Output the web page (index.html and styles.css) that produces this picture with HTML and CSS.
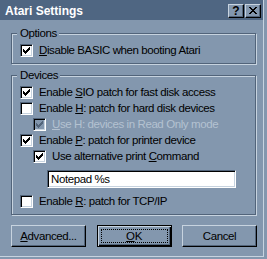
FILE: index.html
```html
<!DOCTYPE html>
<html>
<head>
<meta charset="utf-8">
<title>Atari Settings</title>
<link rel="stylesheet" href="styles.css">
</head>
<body>
<div class="window">
  <div class="titlebar">
    <span class="title">Atari Settings</span>
    <div class="caption-btns">
      <span class="cap cap-help">?</span>
      <span class="cap cap-close"><svg width="8" height="7" viewBox="0 0 8 7" shape-rendering="crispEdges"><path d="M0 0h2v1H0zM6 0h2v1H6zM1 1h2v1H1zM5 1h2v1H5zM2 2h4v1H2zM3 3h2v1H3zM2 4h4v1H2zM1 5h2v1H1zM5 5h2v1H5zM0 6h2v1H0zM6 6h2v1H6z" fill="#000"/></svg></span>
    </div>
  </div>
  <div class="client">
    <div class="group group-options">
      <span class="legend">Options</span>
      <div class="row">
        <span class="check checked"><svg width="7" height="7" viewBox="0 0 7 7" shape-rendering="crispEdges"><path d="M0 2V5H1V6H2V7H3V6H4V5H5V4H6V3H7V0H6V1H5V2H4V3H3V4H2V3H1V2Z"/></svg></span>
        <span class="label"><u>D</u>isable BASIC when booting Atari</span>
      </div>
    </div>
    <div class="group group-devices">
      <span class="legend">Devices</span>
      <div class="row">
        <span class="check checked"><svg width="7" height="7" viewBox="0 0 7 7" shape-rendering="crispEdges"><path d="M0 2V5H1V6H2V7H3V6H4V5H5V4H6V3H7V0H6V1H5V2H4V3H3V4H2V3H1V2Z"/></svg></span>
        <span class="label">Enable <u>S</u>IO patch for fast disk access</span>
      </div>
      <div class="row">
        <span class="check"></span>
        <span class="label">Enable <u>H</u>: patch for hard disk devices</span>
      </div>
      <div class="row indent disabled">
        <span class="check checked"><svg width="7" height="7" viewBox="0 0 7 7" shape-rendering="crispEdges"><path d="M0 2V5H1V6H2V7H3V6H4V5H5V4H6V3H7V0H6V1H5V2H4V3H3V4H2V3H1V2Z"/></svg></span>
        <span class="label"><u>U</u>se H: devices in Read Only mode</span>
      </div>
      <div class="row">
        <span class="check checked"><svg width="7" height="7" viewBox="0 0 7 7" shape-rendering="crispEdges"><path d="M0 2V5H1V6H2V7H3V6H4V5H5V4H6V3H7V0H6V1H5V2H4V3H3V4H2V3H1V2Z"/></svg></span>
        <span class="label">Enable <u>P</u>: patch for printer device</span>
      </div>
      <div class="row indent">
        <span class="check checked"><svg width="7" height="7" viewBox="0 0 7 7" shape-rendering="crispEdges"><path d="M0 2V5H1V6H2V7H3V6H4V5H5V4H6V3H7V0H6V1H5V2H4V3H3V4H2V3H1V2Z"/></svg></span>
        <span class="label">Use alternative print <u>C</u>ommand</span>
      </div>
      <div class="field">Notepad %s</div>
      <div class="row row-last">
        <span class="check"></span>
        <span class="label">Enable <u>R</u>: patch for TCP/IP</span>
      </div>
    </div>
    <div class="buttons">
      <span class="btn"><span class="btn-text"><u>A</u>dvanced...</span></span>
      <span class="btn btn-default"><span class="btn-text focus"><u>O</u>K</span></span>
      <span class="btn"><span class="btn-text">Cancel</span></span>
    </div>
  </div>
</div>
</body>
</html>
```
FILE: styles.css
```css
* { box-sizing: border-box; }
html, body { margin: 0; padding: 0; }
body {
  width: 267px;
  height: 259px;
  overflow: hidden;
  background: #8397ae;
  font-family: "Liberation Sans", Arial, sans-serif;
  font-size: 11.5px;
  letter-spacing: -0.4px;
  color: #000;
}
.window {
  width: 264px;
  height: 257px;
  border-right: 1px solid #c7d3df;
  border-bottom: 1px solid #c7d3df;
  display: flex;
  flex-direction: column;
}
.titlebar {
  height: 20px;
  background: #4f6682;
  display: flex;
  align-items: center;
  justify-content: space-between;
  padding: 1px 2px 0 5px;
}
.title {
  font-weight: bold;
  font-size: 12px;
  letter-spacing: 0;
  color: #fff;
}
.caption-btns { display: flex; gap: 1px; }
.cap {
  width: 16px;
  height: 14px;
  background: #8397ae;
  border-top: 1px solid #c7d3df;
  border-left: 1px solid #c7d3df;
  border-right: 1px solid #000;
  border-bottom: 1px solid #000;
  box-shadow: inset -1px -1px 0 #52647a;
  display: flex;
  align-items: center;
  justify-content: center;
}
.cap-help {
  font-weight: bold;
  font-size: 12px;
  line-height: 12px;
  letter-spacing: 0;
}
.client {
  padding: 13px 7px 0 11px;
  display: flex;
  flex-direction: column;
}
.group {
  position: relative;
  border: 1px solid #52647a;
  box-shadow: inset 1px 1px 0 #c7d3df, 1px 1px 0 #c7d3df;
  padding: 8px 0 5px 8px;
}
.group-options { height: 31px; }
.group-devices { margin-top: 11px; height: 140px; }
.legend {
  position: absolute;
  top: -9px;
  left: 5px;
  line-height: 16px;
  padding: 0 2px 0 3px;
  background: #8397ae;
}
.row {
  height: 16px;
  display: flex;
  align-items: center;
  gap: 6px;
  white-space: nowrap;
}
.row.indent { padding-left: 13px; }
.row-last { margin-top: 5px; }
.check {
  width: 13px;
  height: 13px;
  flex: none;
  background: #fff;
  border-top: 1px solid #52647a;
  border-left: 1px solid #52647a;
  border-right: 1px solid #fff;
  border-bottom: 1px solid #fff;
  box-shadow: inset 1px 1px 0 #000, inset -1px -1px 0 #c7d3df;
  display: flex;
  padding: 2px 0 0 2px;
}
.check svg { fill: #000; }
.disabled .check { background: #8397ae; }
.disabled .check svg { fill: #52647a; }
.disabled .label { color: #b4c2d1; }
.field {
  margin: 6px 0 0 27px;
  width: 189px;
  height: 18px;
  background: #fff;
  border-top: 1px solid #52647a;
  border-left: 1px solid #52647a;
  border-right: 1px solid #fff;
  border-bottom: 1px solid #fff;
  box-shadow: inset 1px 1px 0 #000, inset -1px -1px 0 #c7d3df;
  padding: 0 0 0 3px;
  line-height: 16px;
}
.buttons {
  margin-top: 10px;
  margin-right: -1px;
  display: flex;
  justify-content: space-between;
}
.btn {
  width: 75px;
  height: 22px;
  border-top: 1px solid #c7d3df;
  border-left: 1px solid #c7d3df;
  border-right: 1px solid #000;
  border-bottom: 1px solid #000;
  box-shadow: inset -1px -1px 0 #52647a;
  display: flex;
  align-items: center;
  justify-content: center;
}
.btn-default {
  border: 1px solid #000;
  box-shadow: inset 1px 1px 0 #c7d3df, inset -1px -1px 0 #000, inset -2px -2px 0 #52647a;
  padding: 3px;
}
.btn-text { line-height: 14px; }
.focus {
  width: 100%;
  height: 14px;
  border: 1px dotted #000;
  display: flex;
  align-items: center;
  justify-content: center;
}
```
